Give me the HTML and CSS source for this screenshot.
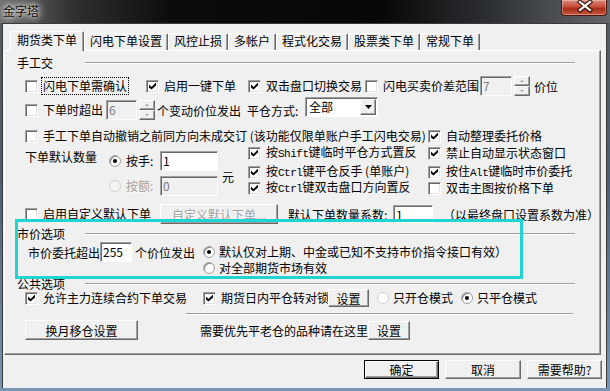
FILE: index.html
```html
<!DOCTYPE html>
<html lang="zh-CN">
<head>
    <meta charset="UTF-8">
    <title>金字塔</title>
    <link rel="stylesheet" href="styles.css">
</head>
<body>
<div class="window">
    <div class="titlebar">
        <span class="title">金字塔</span>
        <span class="close">
            <svg width="44" height="15" viewBox="0 0 44 15">
                <path d="M18 2 L28 10 M28 2 L18 10" stroke="#3b1710" stroke-width="4.5" stroke-linecap="square"/>
                <path d="M18 2 L28 10 M28 2 L18 10" stroke="#ffffff" stroke-width="2.2" stroke-linecap="square"/>
            </svg>
        </span>
    </div>

    <div class="client">
        <div class="tabs">
            <span class="tab active">期货类下单</span>
            <span class="tab">闪电下单设置</span>
            <span class="tab">风控止损</span>
            <span class="tab">多帐户</span>
            <span class="tab">程式化交易</span>
            <span class="tab">股票类下单</span>
            <span class="tab">常规下单</span>
        </div>

        <div class="panel">
            <div class="grp g1"><span class="grp-label">手工交</span><span class="grp-line"></span></div>

            <div class="row r1">
                <label class="chk w121"><i class="cb"></i><span class="focus">闪电下单需确认</span></label>
                <label class="chk w102"><i class="cb on"></i>启用一键下单</label>
                <label class="chk w117"><i class="cb on"></i>双击盘口切换交易</label>
                <label class="chk w115"><i class="cb"></i>闪电买卖价差范围</label>
                <span class="edit off w32">7</span>
                <span class="spin"><b class="up"></b><b class="dn"></b></span>
                <span class="unit-price">价位</span>
            </div>

            <div class="row r2">
                <label class="chk w81"><i class="cb"></i>下单时超出</label>
                <span class="edit off w31">6</span>
                <span class="spin"><b class="up"></b><b class="dn"></b></span>
                <span class="w90 ml2">个变动价位发出</span>
                <span class="w58">平仓方式:</span>
                <span class="select">
                    <span class="select-text">全部</span>
                    <span class="select-btn">
                        <svg width="7" height="4" viewBox="0 0 7 4"><polygon points="0,0 7,0 3.5,4" fill="#000"/></svg>
                    </span>
                </span>
            </div>

            <div class="row r3">
                <label class="chk"><i class="cb"></i><span class="long">手工下单自动撤销之前同方向未成交订 (该功能仅限单账户手工闪电交易)</span></label>
                <label class="chk"><i class="cb on"></i>自动整理委托价格</label>
            </div>

            <div class="qty">
                <span class="qty-label">下单默认数量</span>
                <div class="qty-opts">
                    <label class="opt qopt"><i class="rb on"></i>按手:<span class="edit w58 qedit">1</span></label>
                    <label class="opt qopt dis"><i class="rb dis"></i>按额:<span class="edit off w58 qedit">0</span></label>
                </div>
                <span class="unit">元</span>
                <div class="qcol w180">
                    <label class="chk"><i class="cb on"></i><span>按<span class="en">Shift</span>键临时平仓方式置反</span></label>
                    <label class="chk"><i class="cb on"></i><span>按<span class="en">Ctrl</span>键平仓反手 (单账户)</span></label>
                    <label class="chk"><i class="cb on"></i><span>按<span class="en">Ctrl</span>键双击盘口方向置反</span></label>
                </div>
                <div class="qcol">
                    <label class="chk"><i class="cb on"></i>禁止自动显示状态窗口</label>
                    <label class="chk"><i class="cb on"></i><span>按住<span class="en">Alt</span>键临时市价委托</span></label>
                    <label class="chk"><i class="cb"></i>双击主图按价格下单</label>
                </div>
            </div>

            <div class="row r5">
                <label class="chk w135"><i class="cb"></i>启用自定义默认下单</label>
                <button class="btn dis w118">自定义默认下单...</button>
                <span class="coef">默认下单数量系数:</span>
                <span class="edit w40 h18">1</span>
                <span class="note">（以最终盘口设置系数为准）</span>
            </div>

            <div class="grp g2"><span class="grp-label">市价选项</span><span class="grp-line"></span></div>

            <div class="row mkt">
                <span class="w72">市价委托超出</span>
                <span class="edit w32">255</span>
                <span class="w71 pl3">个价位发出</span>
                <label class="opt"><i class="rb on"></i>默认仅对上期、中金或已知不支持市价指令接口有效）</label>
            </div>
            <div class="row mkt2">
                <label class="opt"><i class="rb"></i>对全部期货市场有效</label>
            </div>

            <div class="grp g3"><span class="grp-label">公共选项</span><span class="grp-line"></span></div>

            <div class="row pub">
                <label class="chk w178"><i class="cb on"></i>允许主力连续合约下单交易</label>
                <label class="chk w125"><i class="cb on"></i>期货日内平仓转对锁</label>
                <button class="btn w41 h18">设置</button>
                <label class="opt ml8"><i class="rb light"></i>只开仓模式</label>
                <label class="opt ml8"><i class="rb on"></i>只平仓模式</label>
            </div>

            <div class="sep"></div>

            <div class="row swap">
                <button class="btn w113">换月移仓设置</button>
                <span class="ml62">需要优先平老仓的品种请在这里</span>
                <button class="btn w42 h19">设置</button>
            </div>

            <div class="highlight"></div>
        </div>

        <div class="dlg-buttons">
            <button class="btn default w75">确定</button>
            <button class="btn w76">取消</button>
            <button class="btn w75">需要帮助?</button>
        </div>
    </div>
</div>
</body>
</html>
```

FILE: styles.css
```css
* {
    margin: 0;
    padding: 0;
    box-sizing: border-box;
}

body {
    width: 610px;
    height: 391px;
    overflow: hidden;
    font-family: "Noto Sans CJK SC", "Noto Sans", sans-serif;
    font-size: 12px;
    color: #000;
    background: linear-gradient(180deg, #55595d 0%, #4d5e71 45%, #7896b4 100%);
}

.window {
    display: flex;
    flex-direction: column;
    height: 391px;
}

/* title bar */
.titlebar {
    height: 23px;
    display: flex;
    justify-content: space-between;
    align-items: flex-start;
    background: linear-gradient(90deg, #707070 0%, #303030 12%, #0c0c0c 28%, #060606 62%, #2c2f32 80%, #63676b 100%);
}

.title {
    margin: 4px 0 0 3px;
    line-height: 14px;
    color: #111;
    text-shadow: 0 0 4px #fff, 0 0 8px rgba(255, 255, 255, 0.9), 0 0 12px rgba(255, 255, 255, 0.6);
}

.close {
    width: 46px;
    height: 16px;
    margin-right: 3px;
    border: 1px solid #4a1a12;
    border-top: none;
    border-radius: 0 0 4px 4px;
    background: linear-gradient(180deg, #dc8c7c 0%, #c8503e 42%, #a92b18 58%, #c65a3e 100%);
    box-shadow: inset 0 0 0 1px rgba(255, 255, 255, 0.3);
    display: flex;
}

/* client area */
.client {
    flex: 1;
    margin: 0 3px 3px 2px;
    background: #f0f0f0;
    border: 1px solid #3a3a3a;
    border-bottom: none;
    display: flex;
    flex-direction: column;
}

.tabs {
    display: flex;
    align-items: flex-end;
    height: 19px;
    margin: 7px 0 0 7px;
}

.tab {
    height: 17px;
    padding: 0 5px;
    line-height: 14px;
    white-space: nowrap;
    border: 1px solid;
    border-color: #fff #696969 transparent #fff;
    border-bottom: none;
    border-radius: 2px 2px 0 0;
    box-shadow: inset -1px 0 #a0a0a0;
}

.tab.active {
    height: 20px;
    padding: 0 6px;
    line-height: 16px;
    margin-bottom: -1px;
    position: relative;
    z-index: 1;
    background: #f0f0f0;
}

.panel {
    position: relative;
    margin-left: 1px;
    width: 597px;
    height: 305px;
    border: 1px solid;
    border-color: #fff #696969 #696969 #fff;
    box-shadow: inset -1px -1px #a0a0a0;
}

/* group headers */
.grp {
    display: flex;
    align-items: center;
    height: 14px;
    margin-left: 12px;
}

.grp-label {
    width: 68px;
    line-height: 14px;
    white-space: nowrap;
}

.grp-line {
    width: 490px;
    height: 2px;
    border-top: 1px solid #a0a0a0;
    border-bottom: 1px solid #fff;
}

.g1 { margin-top: 5px; }
.g2 { margin-top: 3px; }
.g3 { margin-top: 3px; margin-bottom: -1px; height: 12px; }
.g3 .grp-label { line-height: 12px; }

/* rows */
.row {
    display: flex;
    align-items: center;
    margin-left: 20px;
    white-space: nowrap;
}

.r1 { margin-top: 9px; height: 14px; }
.r2 { margin-top: 7px; height: 20px; }
.r3 { margin-top: 9px; height: 14px; }
.r5 { margin-top: 8px; height: 20px; }
.mkt { margin-top: 2px; height: 18px; margin-left: 23px; }
.mkt2 { height: 14px; margin-left: 198px; }
.pub { height: 18px; }
.pub .chk,
.pub .opt { height: 12px; line-height: 12px; }
.swap { margin-top: 5px; height: 20px; }

.sep {
    margin: 6px 0 0 181px;
    width: 387px;
    height: 2px;
    border-top: 1px solid #a0a0a0;
    border-bottom: 1px solid #fff;
}

/* checkbox & radio */
.chk,
.opt {
    display: flex;
    align-items: center;
    height: 14px;
    line-height: 14px;
    flex: none;
}

.cb {
    position: relative;
    flex: none;
    width: 13px;
    height: 13px;
    margin-right: 5px;
    background: #fff;
    border: 1px solid;
    border-color: #a0a0a0 #fff #fff #a0a0a0;
    box-shadow: inset 1px 1px #696969, inset -1px -1px #e3e3e3;
}

.cb.on::after {
    content: "";
    position: absolute;
    left: 2px;
    top: 2px;
    width: 7px;
    height: 7px;
    background: #000;
    clip-path: polygon(0 2px, 2.5px 4.5px, 7px 0, 7px 3px, 2.5px 7px, 0 5px);
}

.rb {
    position: relative;
    flex: none;
    width: 12px;
    height: 12px;
    margin-right: 4px;
    border-radius: 50%;
    background: #fff;
    border: 1px solid #a0a0a0;
    box-shadow: inset 1px 1px #8a8a8a;
}

.rb.on::after {
    content: "";
    position: absolute;
    left: 3px;
    top: 3px;
    width: 4px;
    height: 4px;
    border-radius: 50%;
    background: #000;
}

.rb.dis,
.rb.light {
    border-color: #d0d0d0;
    box-shadow: none;
}

.rb.dis {
    background: #f4f4f4;
}

.dis {
    color: #a0a0a0;
    text-shadow: 1px 1px #fff;
}

.focus {
    outline: 1px dotted #000;
    outline-offset: 1px;
}

.long {
    width: 385px;
}

.en {
    font-family: "Liberation Mono", monospace;
    font-size: 11px;
    letter-spacing: -0.5px;
}

/* edits, spinners, selects */
.edit {
    display: inline-block;
    flex: none;
    height: 20px;
    padding: 1px 0 0 2px;
    line-height: 15px;
    background: #fff;
    border: 1px solid;
    border-color: #a0a0a0 #fff #fff #a0a0a0;
    box-shadow: inset 1px 1px #696969;
    text-shadow: none;
}

.edit.off {
    background: #f0f0f0;
    color: #7a7a7a;
}

.spin {
    display: flex;
    flex-direction: column;
    flex: none;
    width: 16px;
    height: 20px;
    margin-left: 2px;
}

.spin b {
    position: relative;
    flex: 1;
    background: #f0f0f0;
    border: 1px solid;
    border-color: #fff #696969 #696969 #fff;
    box-shadow: inset -1px -1px #a0a0a0;
}

.spin b::after {
    content: "";
    position: absolute;
    left: 5px;
    top: 3px;
    border-left: 2px solid transparent;
    border-right: 2px solid transparent;
}

.spin .up::after { border-bottom: 2px solid #a0a0a0; }
.spin .dn::after { border-top: 2px solid #a0a0a0; }

.unit-price { margin-left: 4px; }

.select {
    display: flex;
    flex: none;
    align-self: flex-start;
    margin-top: -3px;
    width: 73px;
    height: 20px;
    background: #fff;
    border: 1px solid;
    border-color: #a0a0a0 #fff #fff #a0a0a0;
    box-shadow: inset 1px 1px #696969;
    padding: 1px;
}

.select-text {
    flex: 1;
    padding-left: 2px;
    line-height: 16px;
}

.select-btn {
    width: 16px;
    display: flex;
    align-items: center;
    justify-content: center;
    background: #f0f0f0;
    border: 1px solid;
    border-color: #fff #696969 #696969 #fff;
    box-shadow: inset -1px -1px #a0a0a0;
}

/* quantity block */
.qty {
    display: flex;
    align-items: flex-start;
    margin: 3px 0 0 20px;
    height: 50px;
    white-space: nowrap;
}

.qty-label {
    width: 84px;
    margin-top: 4px;
    line-height: 14px;
}

.qty-opts {
    width: 113px;
    display: flex;
    flex-direction: column;
}

.qopt {
    width: 109px;
    height: 20px;
    margin-top: 5px;
}

.qopt .rb { margin-right: 5px; }

.qedit { margin-left: auto; }

.unit {
    width: 26px;
    margin-top: 24px;
    line-height: 14px;
}

.qcol {
    display: flex;
    flex-direction: column;
}

.qcol .chk:nth-child(2) { margin-top: 5px; }
.qcol .chk:nth-child(3) { margin-top: 2px; }

/* buttons */
.btn {
    display: inline-flex;
    align-items: center;
    justify-content: center;
    flex: none;
    height: 20px;
    font: inherit;
    color: #000;
    background: #f0f0f0;
    border: 1px solid;
    border-color: #fff #696969 #696969 #fff;
    box-shadow: inset -1px -1px #a0a0a0;
}

.btn.dis { color: #a0a0a0; }

.btn.default {
    border: 1px solid #000;
    box-shadow: inset 1px 1px #fff, inset -1px -1px #696969, inset -2px -2px #a0a0a0;
}

.coef {
    width: 105px;
    margin-left: 10px;
}

.note { margin-left: 10px; }

.dlg-buttons {
    display: flex;
    justify-content: flex-end;
    gap: 6px;
    margin: 5px 4px 0 0;
}

.dlg-buttons .btn { height: 19px; }

/* highlight annotation laid over the panel */
.highlight {
    position: absolute;
    left: 10px;
    top: 168px;
    width: 508px;
    height: 60px;
    border: 3px solid #21d4d4;
    pointer-events: none;
}

/* widths and small offsets */
.w31 { width: 31px; }
.w32 { width: 32px; }
.w40 { width: 40px; }
.w41 { width: 41px; }
.w42 { width: 42px; }
.w58 { width: 58px; }
.w71 { width: 71px; }
.w72 { width: 72px; }
.w75 { width: 75px; }
.w76 { width: 76px; }
.w81 { width: 81px; }
.w90 { width: 90px; }
.w102 { width: 102px; }
.w113 { width: 113px; }
.w115 { width: 115px; }
.w117 { width: 117px; }
.w118 { width: 118px; }
.w121 { width: 121px; }
.w125 { width: 125px; }
.w135 { width: 135px; }
.w178 { width: 178px; }
.w180 { width: 180px; }
.h18 { height: 18px; }
.h19 { height: 19px; }
.ml2 { margin-left: 2px; }
.ml8 { margin-left: 8px; }
.ml62 { margin-left: 62px; }
.pl3 { padding-left: 3px; }
```
